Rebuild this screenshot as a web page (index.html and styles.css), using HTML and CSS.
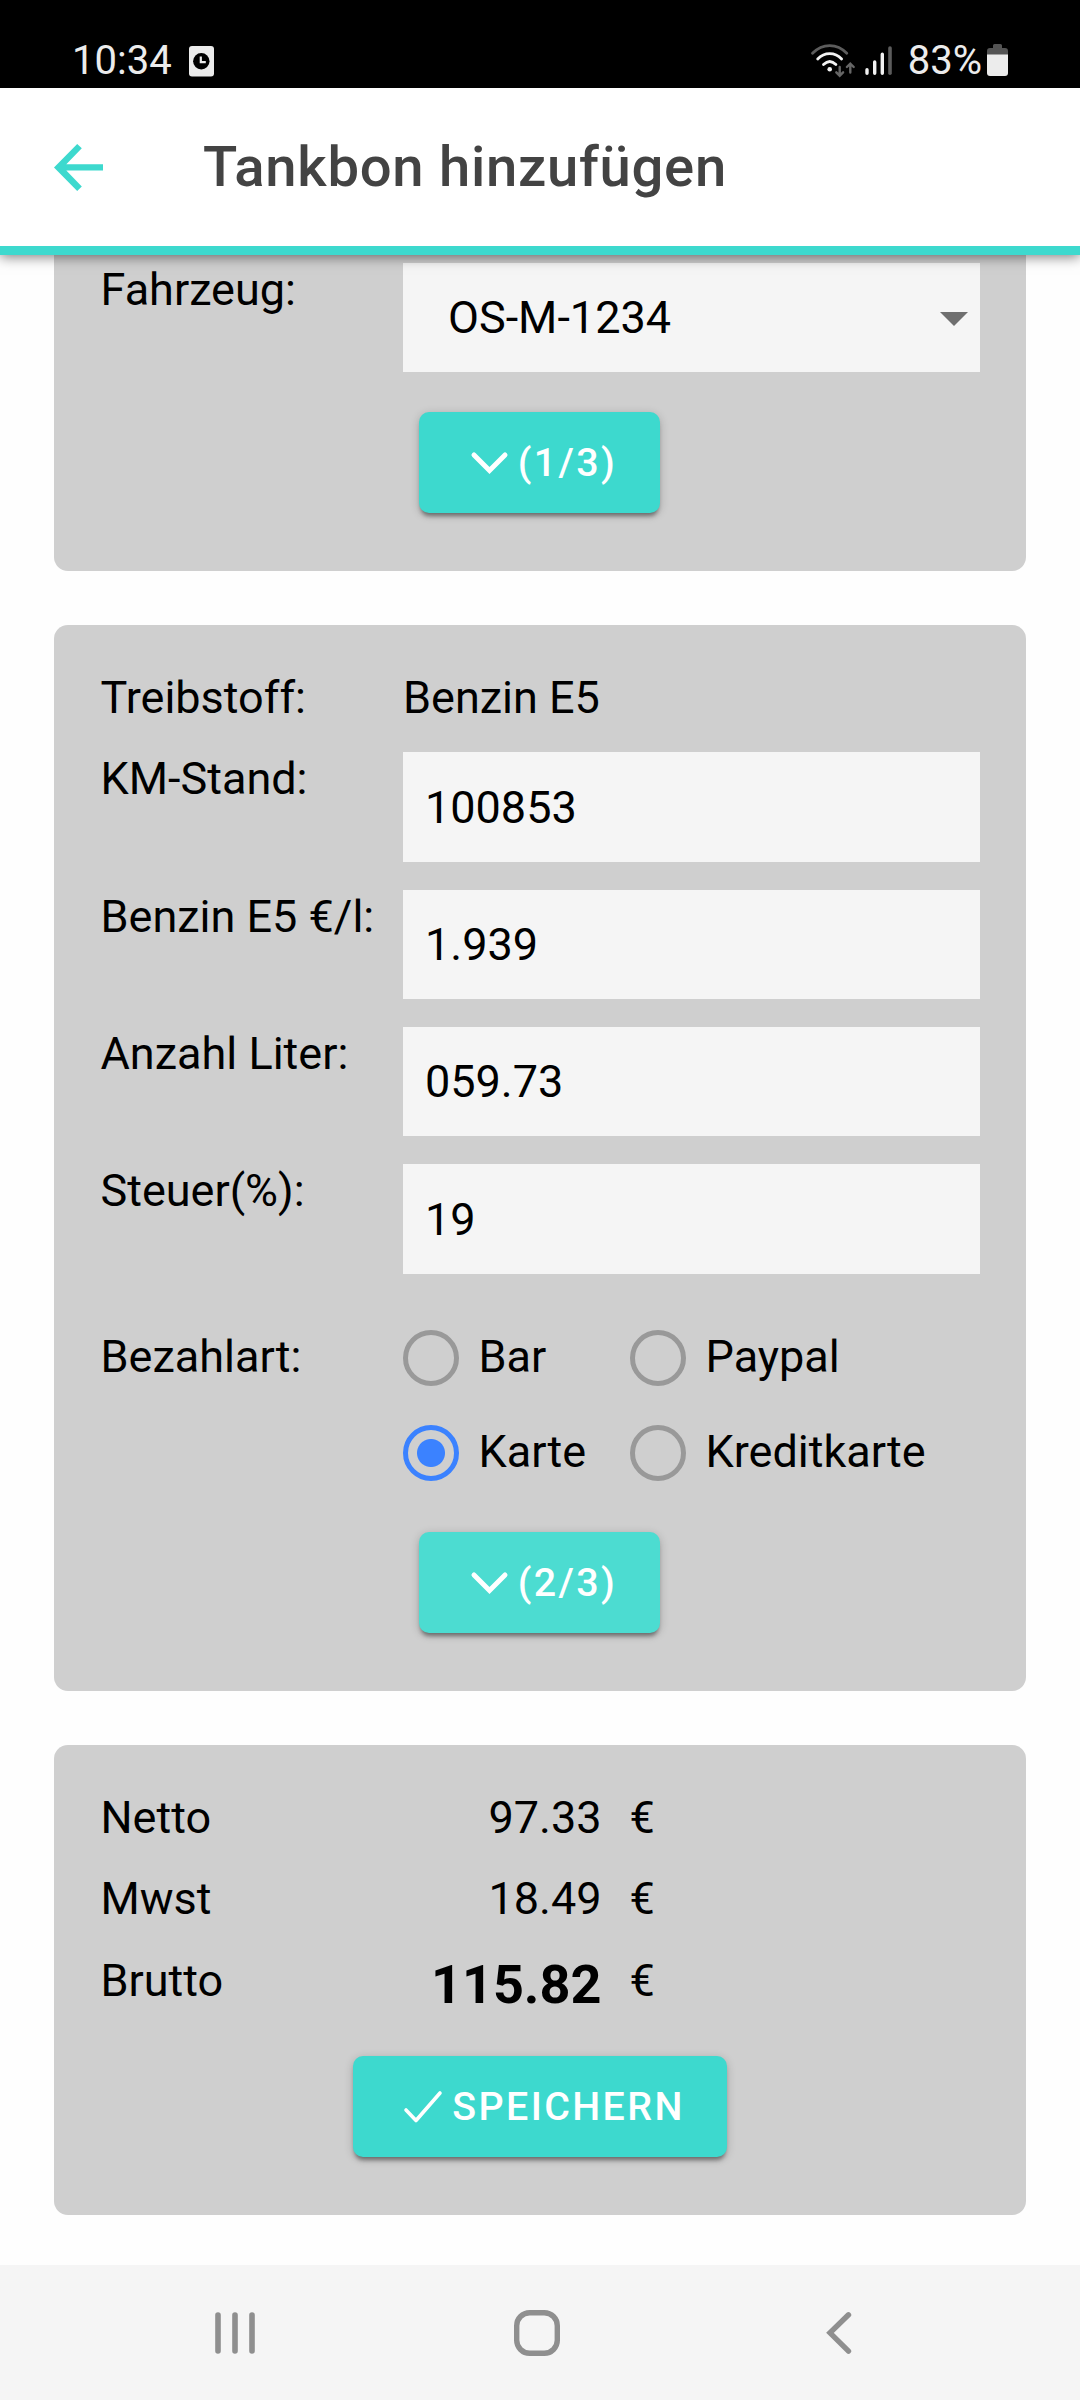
FILE: index.html
```html
<!DOCTYPE html>
<html lang="de">
<head>
<meta charset="utf-8">
<title>Tankbon hinzufügen</title>
<link rel="stylesheet" href="styles.css">
</head>
<body>
<div class="screen">
  <div class="status-bar">
    <div class="status-left">
      <span class="status-text">10:34</span>
      <svg class="icon-file" viewBox="0 0 25 31" width="25" height="31">
        <rect width="25" height="30.5" rx="3" fill="#ececec"/>
        <circle cx="12.3" cy="15.2" r="8.2" fill="#000"/>
        <path d="M11.8 10.500v5.600h5" fill="none" stroke="#ececec" stroke-width="2.200"/>
      </svg>
    </div>
    <div class="status-right">
      <svg viewBox="0 0 84 36" width="84" height="36">
        <g fill="none" stroke-linecap="round" stroke-width="2.800">
          <path d="M1.500 9.300C11.500 -1 26 -1 35.800 9.300" stroke="#5c5c5c"/>
          <path d="M6.700 15C13.500 7.800 24 7.800 30.600 15M12.500 20.500C16.500 16.600 21 16.600 24.900 20.500" stroke="#f2f2f2"/>
          <path d="M28.700 23V31.500M25.300 28.300L28.700 31.700L32.100 28.300M39.300 28.500V20M35.900 23L39.300 19.600L42.700 23" stroke="#666" stroke-width="2.400"/>
          <path d="M56 25.700V29.300M63.700 18V29.300M71.300 10.300V29.300" stroke="#f2f2f2" stroke-width="3.400"/>
          <path d="M79 4V29.300" stroke="#5c5c5c" stroke-width="3.600"/>
        </g>
        <circle cx="18.700" cy="25.300" r="2.300" fill="#f2f2f2"/>
      </svg>
      <span class="status-text">83%</span>
      <svg class="icon-battery" viewBox="0 0 21 32" width="21" height="32">
        <path d="M6 1.500Q6 0 7.500 0H13.500Q15 0 15 1.500V4H18Q21 4 21 7V11H0V7Q0 4 3 4H6Z" fill="#545454"/>
        <path d="M0 10.600H21V29Q21 32 18 32H3Q0 32 0 29Z" fill="#ececec"/>
      </svg>
    </div>
  </div>

  <header class="app-bar">
    <svg class="icon-back" viewBox="0 0 49 47" width="49" height="47">
      <path d="M49 20.300H12.300L27.800 4.300L23.200 0L0 23.400L23.200 47L27.800 42.400L12.300 26.600H49Z" fill="#3dd9ce"/>
    </svg>
    <h1 class="title">Tankbon hinzufügen</h1>
  </header>

  <main class="content">
    <section class="card card-vehicle">
      <div class="field">
        <span class="label">Fahrzeug:</span>
        <div class="select">
          <span>OS-M-1234</span>
          <svg class="icon-caret" viewBox="0 0 28 14" width="28" height="14"><path d="M0 0H28L14 14Z" fill="#6f6f6f"/></svg>
        </div>
      </div>
      <button class="button button-step">
        <svg viewBox="0 0 37 22" width="37" height="22"><path d="M3 3L18.500 18.500L34 3" fill="none" stroke="#fff" stroke-width="5" stroke-linecap="round"/></svg>
        <span>(1/3)</span>
      </button>
    </section>

    <section class="card card-fuel">
      <div class="fields">
        <div class="field"><span class="label">Treibstoff:</span><span>Benzin E5</span></div>
        <div class="field"><label class="label" for="km">KM-Stand:</label><input class="input" id="km" value="100853"></div>
        <div class="field"><label class="label" for="price">Benzin E5 €/l:</label><input class="input" id="price" value="1.939"></div>
        <div class="field"><label class="label" for="liters">Anzahl Liter:</label><input class="input" id="liters" value="059.73"></div>
        <div class="field"><label class="label" for="tax">Steuer(%):</label><input class="input" id="tax" value="19"></div>
      </div>
      <div class="field payment">
        <span class="label">Bezahlart:</span>
        <div class="options">
          <label class="option"><input type="radio" class="radio" name="pay">Bar</label>
          <label class="option"><input type="radio" class="radio" name="pay">Paypal</label>
          <label class="option"><input type="radio" class="radio" name="pay" checked>Karte</label>
          <label class="option"><input type="radio" class="radio" name="pay">Kreditkarte</label>
        </div>
      </div>
      <button class="button button-step button-pressed">
        <svg viewBox="0 0 37 22" width="37" height="22"><path d="M3 3L18.500 18.500L34 3" fill="none" stroke="#fff" stroke-width="5" stroke-linecap="round"/></svg>
        <span>(2/3)</span>
      </button>
    </section>

    <section class="card card-total">
      <div class="totals">
        <span class="label">Netto</span><span class="amount">97.33</span><span>€</span>
        <span class="label">Mwst</span><span class="amount">18.49</span><span>€</span>
        <span class="label">Brutto</span><span class="amount amount-total">115.82</span><span>€</span>
      </div>
      <button class="button button-save">
        <svg viewBox="0 0 38 32" width="38" height="32"><path d="M2 19L12 29.500L36 2" fill="none" stroke="#fff" stroke-width="3.600" stroke-linecap="round" stroke-linejoin="round"/></svg>
        <span>SPEICHERN</span>
      </button>
    </section>
  </main>

  <nav class="nav-bar">
    <svg viewBox="0 0 40 42" width="40" height="42"><path d="M3 3V39M20 3V39M37 3V39" stroke="#8f8f8f" stroke-width="5.600" stroke-linecap="round"/></svg>
    <svg class="icon-home" viewBox="0 0 46 46" width="46" height="46"><rect x="2.700" y="2.700" width="40.600" height="40.600" rx="13" fill="none" stroke="#8f8f8f" stroke-width="5.400"/></svg>
    <svg viewBox="0 0 26 42" width="26" height="42"><path d="M22.500 2.800L4 20.800L22.500 39.200" fill="none" stroke="#8f8f8f" stroke-width="5.400" stroke-linecap="round"/></svg>
  </nav>
</div>
</body>
</html>
```
FILE: styles.css
```css
* { box-sizing: border-box; }

body {
  margin: 0;
  background: #fefefe;
  color: #000;
  font: 45px/53px Roboto, sans-serif;
}

svg { display: block; flex: none; overflow: visible; }

.screen {
  display: flex;
  flex-direction: column;
  width: 1080px;
  height: 2400px;
  overflow: hidden;
}

/* System status bar */
.status-bar {
  display: flex;
  justify-content: space-between;
  height: 88px;
  padding: 44px 72px 0 72px;
  background: #000;
  color: #ececec;
}

.status-left,
.status-right { display: flex; align-items: flex-start; }

.status-text {
  font-size: 40px;
  line-height: 34px;
}

.icon-file { margin: 2px 0 0 17px; }
.status-right .status-text { margin-left: 12.500px; }
.icon-battery { margin-left: 5px; }

/* App bar */
.app-bar {
  display: flex;
  align-items: center;
  gap: 100px;
  height: 167px;
  padding-left: 54px;
  background: #fff;
  border-bottom: 9px solid #3dd9ce;
  box-shadow: 0 2px 12px rgba(0, 0, 0, .5);
  z-index: 1;
}

.title {
  margin: 0;
  color: #434343;
  font-size: 56.250px;
  font-weight: 500;
  line-height: 66px;
  letter-spacing: .700px;
}

/* Cards */
.content {
  display: flex;
  flex: 1;
  flex-direction: column;
  gap: 54px;
  padding: 0 54px;
}

.card {
  display: flex;
  flex-direction: column;
  align-items: center;
  padding: 46px 46px 58px;
  background: #cfcfcf;
  border-radius: 14px;
}

.card-vehicle {
  gap: 40px;
  padding-top: 8px;
  border-radius: 0 0 14px 14px;
}

.field {
  display: grid;
  grid-template-columns: 303px 577px;
  align-items: start;
}

.label { padding-left: .5px; }

.select,
.input {
  width: 100%;
  height: 109px;
  border: 0;
  background: #f5f5f5;
  color: inherit;
  font: inherit;
}

.select {
  display: flex;
  align-items: center;
  justify-content: space-between;
  padding: 0 12px 0 45px;
}

.icon-caret { margin-top: 3px; }

.input { padding: 0 22px; border-radius: 0; }

.fields {
  display: grid;
  grid-template-rows: 53px 110px 109px 109px 110px;
  gap: 28px;
}

.fields .input { height: 110px; }
.fields .field:nth-child(3) .input,
.fields .field:nth-child(4) .input { height: 109px; }

.payment { margin: 56px 0 51px; }

.options {
  display: grid;
  grid-template-columns: 227px auto;
  grid-auto-rows: 56px;
  row-gap: 39px;
}

.option { display: flex; gap: 19.500px; }

.radio {
  appearance: none;
  flex: none;
  width: 56px;
  height: 56px;
  margin: 0;
  border: 5px solid #999;
  border-radius: 50%;
}

.radio:checked {
  border-color: #3b82ff;
  background: radial-gradient(circle, #3b82ff 13.500px, transparent 14.500px);
}

/* Buttons */
.button {
  display: flex;
  align-items: center;
  justify-content: center;
  gap: 10px;
  height: 101px;
  padding: 0 0 0 9px;
  border: 0;
  border-radius: 10px;
  background: #3dd9ce;
  box-shadow: 0 5px 4px -2px rgba(0, 0, 0, .4), 0 2px 10px rgba(0, 0, 0, .2);
  color: #fff;
  font: 500 39.375px/46px Roboto, sans-serif;
  letter-spacing: 2.400px;
}

.button-step { width: 241px; margin-right: 1px; }
.button-pressed { background: #4cdcd1; }
.button-save { width: 374px; }

/* Totals */
.totals {
  display: grid;
  grid-template-columns: 303px 198.500px 1fr;
  grid-template-rows: 81px 82px 63px;
  align-self: stretch;
  margin-bottom: 39px;
}

.amount { text-align: right; }
.amount + span { padding-left: 28px; }

.amount-total {
  font-size: 54px;
  font-weight: 700;
  line-height: 62px;
}

/* Navigation bar */
.nav-bar {
  display: flex;
  align-items: center;
  justify-content: space-between;
  height: 135px;
  padding: 0 228px 0 215px;
  background: #f5f5f5;
}

.icon-home { margin-right: 7px; }
```
